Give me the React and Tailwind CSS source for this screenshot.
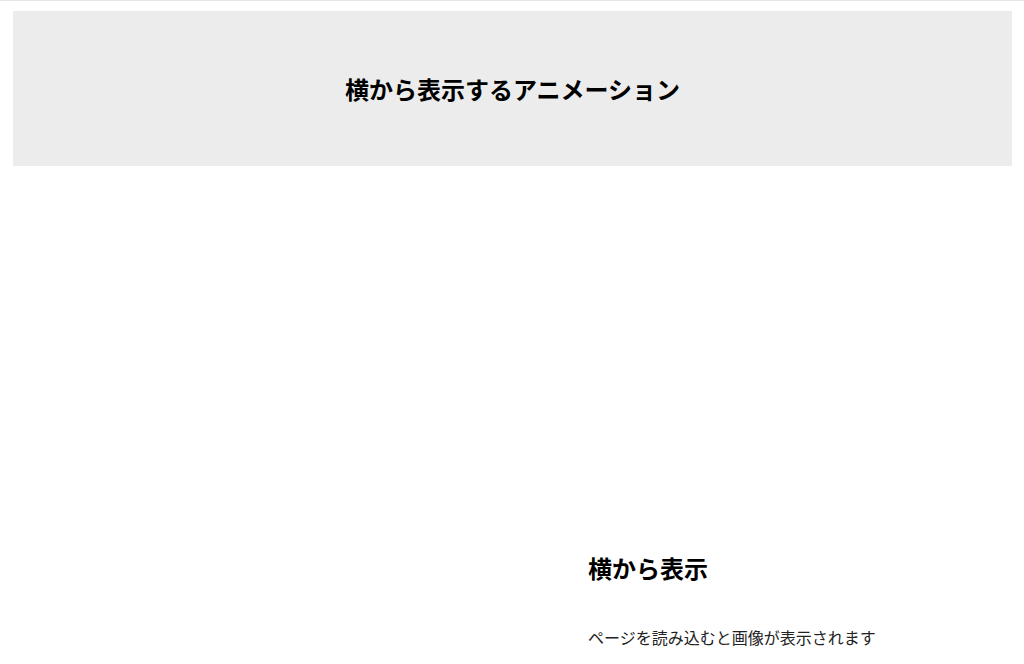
function Header() {
  return (
    <header className="mx-[13px] mr-[12px] mt-[10px] flex h-[155px] items-center justify-center bg-[#ececec]">
      <h1 className="text-[24px] font-bold leading-[36px] text-black">
        横から表示するアニメーション
      </h1>
    </header>
  );
}

function SlideSection() {
  return (
    <section className="mx-[13px] flex">
      <div className="w-[575px] shrink-0" />
      <div className="pt-[384px]">
        <h2 className="text-[24px] font-bold leading-[36px] text-black">横から表示</h2>
        <p className="mt-[39px] text-[16px] leading-[24px] text-[#222]">
          ページを読み込むと画像が表示されます
        </p>
      </div>
    </section>
  );
}

export default function App() {
  return (
    <div
      className="h-[664px] overflow-hidden border-t border-[#e6e6e6] bg-white"
      style={{ fontFamily: '"Noto Sans CJK JP", "Noto Sans", sans-serif' }}
    >
      <Header />
      <SlideSection />
    </div>
  );
}
